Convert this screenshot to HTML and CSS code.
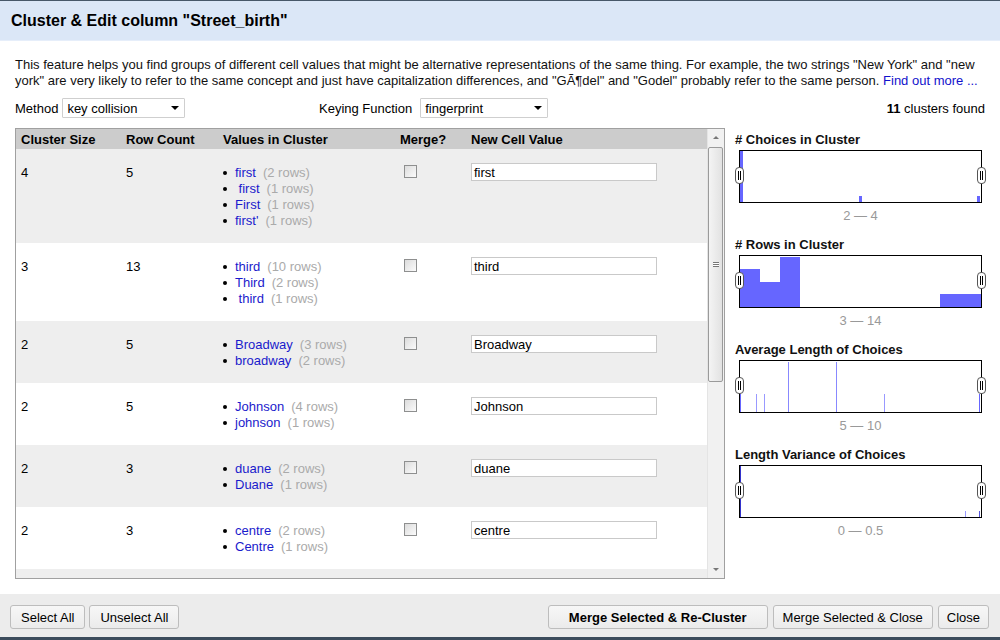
FILE: index.html
```html
<!DOCTYPE html>
<html>
<head>
<meta charset="utf-8">
<link rel="stylesheet" href="styles.css">
</head>
<body>
<div class="dialog">
  <div class="header">Cluster &amp; Edit column "Street_birth"</div>
  <div class="body">
    <p class="desc">This feature helps you find groups of different cell values that might be alternative representations of the same thing. For example, the two strings "New York" and "new york" are very likely to refer to the same concept and just have capitalization differences, and "GÃ¶del" and "Godel" probably refer to the same person. <a class="link">Find out more ...</a></p>
    <div class="controls">
      <div class="ctl method">
        <span>Method</span>
        <div class="sel sel-method"><span>key collision</span><span class="arrow"></span></div>
      </div>
      <div class="ctl">
        <span>Keying Function</span>
        <div class="sel sel-key"><span>fingerprint</span><span class="arrow"></span></div>
      </div>
      <div class="found"><b>11</b> clusters found</div>
    </div>
    <div class="main">
      <div class="tablebox">
        <div class="tablescroll">
          <div class="row thead">
            <div>Cluster Size</div><div>Row Count</div><div>Values in Cluster</div><div>Merge?</div><div>New Cell Value</div>
          </div>
          <div class="row odd">
            <div>4</div><div>5</div>
            <div>
              <div class="v"><span class="b"></span><a class="val">first</a><span class="c">(2 rows)</span></div>
              <div class="v"><span class="b"></span><a class="val"> first</a><span class="c">(1 rows)</span></div>
              <div class="v"><span class="b"></span><a class="val">First</a><span class="c">(1 rows)</span></div>
              <div class="v"><span class="b"></span><a class="val">first'</a><span class="c">(1 rows)</span></div>
            </div>
            <div><span class="cb"></span></div>
            <div><div class="inp">first</div></div>
          </div>
          <div class="row">
            <div>3</div><div>13</div>
            <div>
              <div class="v"><span class="b"></span><a class="val">third</a><span class="c">(10 rows)</span></div>
              <div class="v"><span class="b"></span><a class="val">Third</a><span class="c">(2 rows)</span></div>
              <div class="v"><span class="b"></span><a class="val"> third</a><span class="c">(1 rows)</span></div>
            </div>
            <div><span class="cb"></span></div>
            <div><div class="inp">third</div></div>
          </div>
          <div class="row odd">
            <div>2</div><div>5</div>
            <div>
              <div class="v"><span class="b"></span><a class="val">Broadway</a><span class="c">(3 rows)</span></div>
              <div class="v"><span class="b"></span><a class="val">broadway</a><span class="c">(2 rows)</span></div>
            </div>
            <div><span class="cb"></span></div>
            <div><div class="inp">Broadway</div></div>
          </div>
          <div class="row">
            <div>2</div><div>5</div>
            <div>
              <div class="v"><span class="b"></span><a class="val">Johnson</a><span class="c">(4 rows)</span></div>
              <div class="v"><span class="b"></span><a class="val">johnson</a><span class="c">(1 rows)</span></div>
            </div>
            <div><span class="cb"></span></div>
            <div><div class="inp">Johnson</div></div>
          </div>
          <div class="row odd">
            <div>2</div><div>3</div>
            <div>
              <div class="v"><span class="b"></span><a class="val">duane</a><span class="c">(2 rows)</span></div>
              <div class="v"><span class="b"></span><a class="val">Duane</a><span class="c">(1 rows)</span></div>
            </div>
            <div><span class="cb"></span></div>
            <div><div class="inp">duane</div></div>
          </div>
          <div class="row">
            <div>2</div><div>3</div>
            <div>
              <div class="v"><span class="b"></span><a class="val">centre</a><span class="c">(2 rows)</span></div>
              <div class="v"><span class="b"></span><a class="val">Centre</a><span class="c">(1 rows)</span></div>
            </div>
            <div><span class="cb"></span></div>
            <div><div class="inp">centre</div></div>
          </div>
          <div class="row-filler odd"></div>
        </div>
        <div class="scrollbar">
          <div class="sb-btn"><span class="tri-up"></span></div>
          <div class="sb-track">
            <div class="sb-thumb"><span class="grip"></span></div>
          </div>
          <div class="sb-btn"><span class="tri-down"></span></div>
        </div>
      </div>
      <div class="facets">
        <div class="facet">
          <div class="ftitle"># Choices in Cluster</div>
          <div class="chart">
            <svg width="241" height="51" viewBox="0 0 241 51">
              <rect x="0" y="0" width="3" height="51" fill="#6666ff"/>
              <rect x="119" y="45" width="3" height="6" fill="#6666ff"/>
              <rect x="237" y="45" width="3" height="6" fill="#6666ff"/>
            </svg>
            <span class="handle hl"><svg width="9" height="17" viewBox="0 0 9 17"><rect x="0.5" y="0.5" width="8" height="16" rx="3.5" fill="#fff" stroke="#555"/><line x1="3.5" y1="4" x2="3.5" y2="13" stroke="#000"/><line x1="5.5" y1="4" x2="5.5" y2="13" stroke="#000"/></svg></span>
            <span class="handle hr"><svg width="9" height="17" viewBox="0 0 9 17"><rect x="0.5" y="0.5" width="8" height="16" rx="3.5" fill="#fff" stroke="#555"/><line x1="3.5" y1="4" x2="3.5" y2="13" stroke="#000"/><line x1="5.5" y1="4" x2="5.5" y2="13" stroke="#000"/></svg></span>
          </div>
          <div class="range">2 — 4</div>
        </div>
        <div class="facet">
          <div class="ftitle"># Rows in Cluster</div>
          <div class="chart">
            <svg width="241" height="51" viewBox="0 0 241 51">
              <rect x="0" y="13" width="20" height="38" fill="#6666ff"/>
              <rect x="20" y="26" width="20" height="25" fill="#6666ff"/>
              <rect x="40" y="1" width="20" height="50" fill="#6666ff"/>
              <rect x="200" y="38" width="41" height="13" fill="#6666ff"/>
            </svg>
            <span class="handle hl"><svg width="9" height="17" viewBox="0 0 9 17"><rect x="0.5" y="0.5" width="8" height="16" rx="3.5" fill="#fff" stroke="#555"/><line x1="3.5" y1="4" x2="3.5" y2="13" stroke="#000"/><line x1="5.5" y1="4" x2="5.5" y2="13" stroke="#000"/></svg></span>
            <span class="handle hr"><svg width="9" height="17" viewBox="0 0 9 17"><rect x="0.5" y="0.5" width="8" height="16" rx="3.5" fill="#fff" stroke="#555"/><line x1="3.5" y1="4" x2="3.5" y2="13" stroke="#000"/><line x1="5.5" y1="4" x2="5.5" y2="13" stroke="#000"/></svg></span>
          </div>
          <div class="range">3 — 14</div>
        </div>
        <div class="facet">
          <div class="ftitle">Average Length of Choices</div>
          <div class="chart">
            <svg width="241" height="51" viewBox="0 0 241 51">
              <rect x="0" y="33" width="1" height="18" fill="#6666ff"/>
              <rect x="16" y="33" width="1" height="18" fill="#9999ff"/>
              <rect x="24" y="33" width="1" height="18" fill="#9999ff"/>
              <rect x="48" y="1" width="1" height="50" fill="#8888ff"/>
              <rect x="96" y="1" width="1" height="50" fill="#8888ff"/>
              <rect x="144" y="33" width="1" height="18" fill="#9999ff"/>
              <rect x="239" y="33" width="1" height="18" fill="#6666ff"/>
            </svg>
            <span class="handle hl"><svg width="9" height="17" viewBox="0 0 9 17"><rect x="0.5" y="0.5" width="8" height="16" rx="3.5" fill="#fff" stroke="#555"/><line x1="3.5" y1="4" x2="3.5" y2="13" stroke="#000"/><line x1="5.5" y1="4" x2="5.5" y2="13" stroke="#000"/></svg></span>
            <span class="handle hr"><svg width="9" height="17" viewBox="0 0 9 17"><rect x="0.5" y="0.5" width="8" height="16" rx="3.5" fill="#fff" stroke="#555"/><line x1="3.5" y1="4" x2="3.5" y2="13" stroke="#000"/><line x1="5.5" y1="4" x2="5.5" y2="13" stroke="#000"/></svg></span>
          </div>
          <div class="range">5 — 10</div>
        </div>
        <div class="facet">
          <div class="ftitle">Length Variance of Choices</div>
          <div class="chart">
            <svg width="241" height="51" viewBox="0 0 241 51">
              <rect x="0" y="0" width="1" height="51" fill="#3333cc"/>
              <rect x="225" y="45" width="1" height="6" fill="#9999ff"/>
              <rect x="239" y="45" width="1" height="6" fill="#5555dd"/>
            </svg>
            <span class="handle hl"><svg width="9" height="17" viewBox="0 0 9 17"><rect x="0.5" y="0.5" width="8" height="16" rx="3.5" fill="#fff" stroke="#555"/><line x1="3.5" y1="4" x2="3.5" y2="13" stroke="#000"/><line x1="5.5" y1="4" x2="5.5" y2="13" stroke="#000"/></svg></span>
            <span class="handle hr"><svg width="9" height="17" viewBox="0 0 9 17"><rect x="0.5" y="0.5" width="8" height="16" rx="3.5" fill="#fff" stroke="#555"/><line x1="3.5" y1="4" x2="3.5" y2="13" stroke="#000"/><line x1="5.5" y1="4" x2="5.5" y2="13" stroke="#000"/></svg></span>
          </div>
          <div class="range">0 — 0.5</div>
        </div>
      </div>
    </div>
  </div>
  <div class="footer">
    <div class="btns">
      <button class="btn">Select All</button>
      <button class="btn">Unselect All</button>
    </div>
    <div class="btns">
      <button class="btn strong">Merge Selected &amp; Re-Cluster</button>
      <button class="btn mclose">Merge Selected &amp; Close</button>
      <button class="btn close">Close</button>
    </div>
  </div>
</div>
</body>
</html>
```

FILE: styles.css
```css
* { box-sizing: border-box; }
html, body { margin: 0; padding: 0; }
body {
  width: 1000px;
  height: 640px;
  overflow: hidden;
  background: #fff;
  font-family: "Liberation Sans", Arial, sans-serif;
  font-size: 13px;
  color: #000;
}
.dialog {
  display: flex;
  flex-direction: column;
  height: 640px;
  border-top: 1px solid #475869;
  border-bottom: 3px solid #3c4c5c;
}
.header {
  flex: 0 0 40px;
  display: flex;
  align-items: center;
  padding: 1px 11px 0;
  background: #dbe7f7;
  border-bottom: 1px solid #e6eefa;
  font-size: 16px;
  font-weight: bold;
}
.body {
  flex: 1;
  padding: 16px 15px 0 15px;
  min-height: 0;
}
.desc {
  margin: 0;
  line-height: 16px;
  color: #111;
}
.link { color: #1111cc; }
.controls {
  display: flex;
  align-items: center;
  height: 20px;
  margin-top: 9px;
}
.ctl { display: flex; align-items: center; }
.method { width: 304px; }
.sel {
  display: flex;
  align-items: center;
  justify-content: space-between;
  height: 20px;
  border: 1px solid #cfcfcf;
  border-radius: 1px;
  background: #fff;
  padding: 0 5px 0 4px;
}
.sel-method { width: 123px; margin-left: 4px; }
.sel-key { width: 128px; margin-left: 8px; }
.arrow {
  width: 0; height: 0;
  border-left: 4px solid transparent;
  border-right: 4px solid transparent;
  border-top: 4px solid #000;
}
.found { margin-left: auto; }
.main {
  display: flex;
  gap: 10px;
  margin-top: 10px;
}
.tablebox {
  display: flex;
  width: 710px;
  height: 451px;
  border: 1px solid #a0a0a0;
}
.tablescroll {
  flex: 1;
  overflow: hidden;
  background: #fff;
}
.row {
  display: grid;
  grid-template-columns: 105px 97px 177px 71px 1fr;
  padding: 16px 0 14px 5px;
  line-height: 16px;
}
.odd { background: #eeeeee; }
.row.thead {
  padding: 3px 0 1px 5px;
  background: #cccccc;
  font-weight: bold;
}
.row-filler { height: 40px; }
.v { white-space: pre; }
.b {
  display: inline-block;
  width: 4px;
  height: 4px;
  margin: 0 8px 2px 0;
  border-radius: 50%;
  background: #000;
  vertical-align: middle;
}
.val { color: #1a1acc; }
.c { color: #aaaaaa; margin-left: 7px; }
.cb {
  display: block;
  width: 13px;
  height: 13px;
  margin: 0 0 0 4px;
  border: 1px solid #8e8f8f;
  background: linear-gradient(135deg, #dcdcdc, #fbfbfb);
}
.inp {
  width: 186px;
  height: 18px;
  margin-top: -2px;
  padding: 1px 2px 0;
  border: 1px solid #c9c9c9;
  background: #fff;
  line-height: 15px;
}
.scrollbar {
  display: flex;
  flex-direction: column;
  width: 17px;
  background: #f1f1f1;
  border-left: 1px solid #e4e4e4;
}
.sb-btn {
  flex: 0 0 17px;
  display: flex;
  align-items: center;
  justify-content: center;
}
.tri-up, .tri-down {
  width: 0; height: 0;
  border-left: 3px solid transparent;
  border-right: 3px solid transparent;
}
.tri-up { border-bottom: 3px solid #777; }
.tri-down { border-top: 3px solid #777; }
.sb-track { flex: 1; padding-top: 1px; }
.sb-thumb {
  display: flex;
  align-items: center;
  justify-content: center;
  width: 15px;
  height: 235px;
  border: 1px solid #9a9a9a;
  border-radius: 2px;
  background: linear-gradient(90deg, #f4f4f4, #e2e2e2);
}
.grip {
  width: 6px;
  height: 5px;
  border-top: 1px solid #777;
  border-bottom: 1px solid #777;
  background: linear-gradient(#fff 0 1px, #777 1px 2px, #fff 2px);
}
.facets {
  width: 250px;
  padding-top: 3px;
}
.facet { margin-bottom: 13px; }
.ftitle {
  font-weight: bold;
  line-height: 16px;
  padding-top: 1px;
  color: #111;
}
.chart {
  position: relative;
  width: 243px;
  height: 53px;
  margin: 2px 0 0 4px;
  border: 1px solid #000;
  background: #fff;
}
.chart > svg { display: block; }
.handle {
  position: absolute;
  top: 16px;
  width: 9px;
  height: 17px;
}
.handle svg { display: block; }
.hl { left: -5px; }
.hr { right: -5px; }
.range {
  width: 243px;
  margin: 5px 0 -1px 4px;
  text-align: center;
  line-height: 16px;
  color: #999;
}
.footer {
  flex: 0 0 43px;
  display: flex;
  justify-content: space-between;
  align-items: flex-start;
  padding: 11px 11px 0 10px;
  background: #ececec;
}
.btns { display: flex; gap: 4px; }
.btns + .btns { gap: 5px; }
.btn {
  height: 24px;
  padding: 0 10px;
  border: 1px solid #bdbdbd;
  border-radius: 3px;
  background: linear-gradient(#f7f7f7, #ebebeb);
  font-family: "Liberation Sans", Arial, sans-serif;
  font-size: 13px;
  color: #000;
}
.btn.strong { font-weight: bold; padding: 0 20px; }
.btn.mclose { padding: 0 9px; }
.btn.close { padding: 0 8px; }
```
